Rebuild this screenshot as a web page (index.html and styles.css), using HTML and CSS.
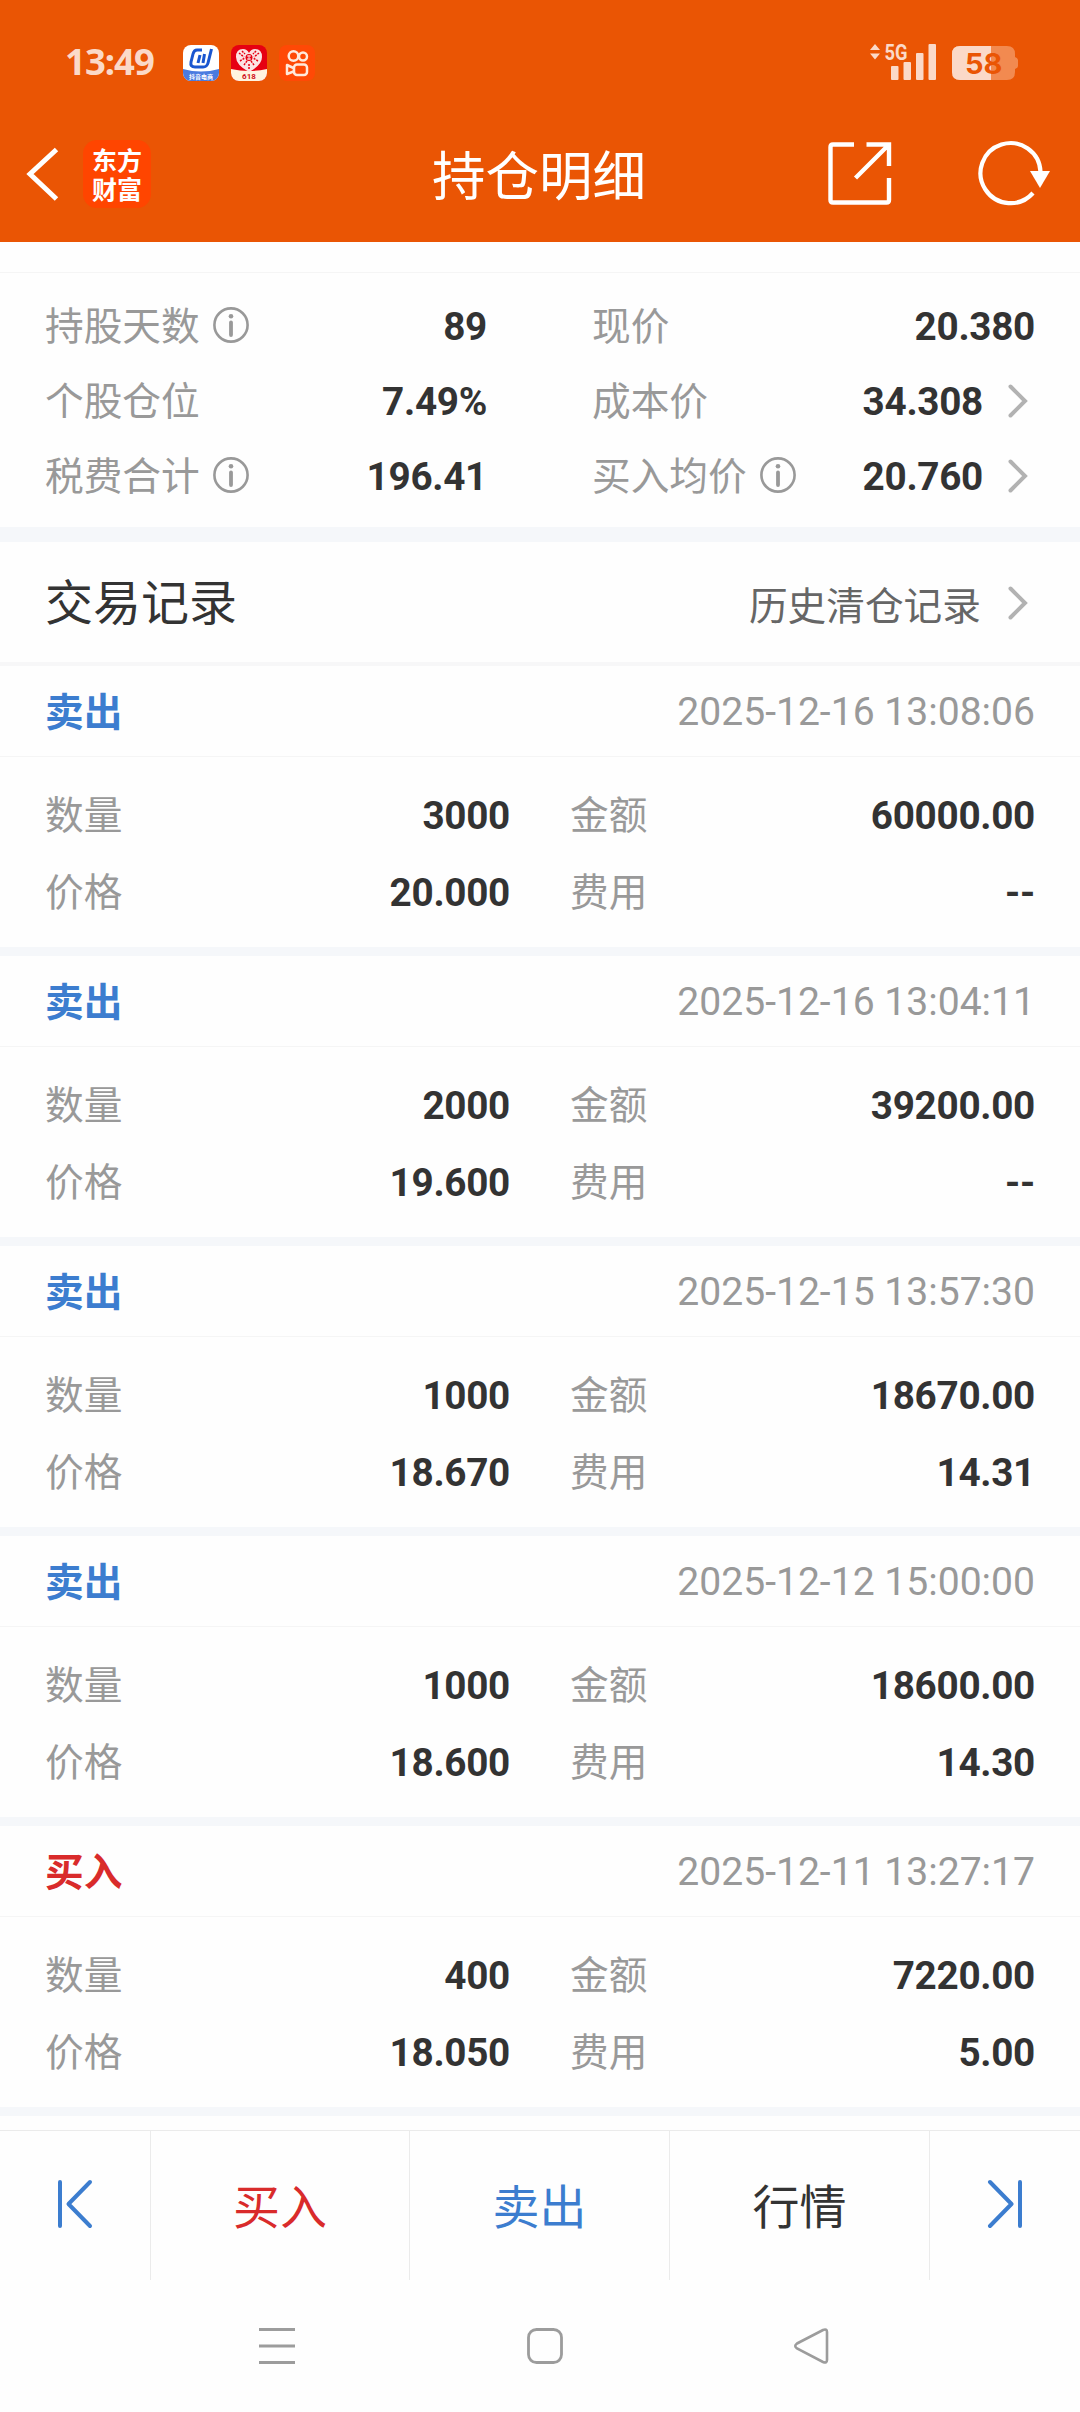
FILE: index.html
```
<!DOCTYPE html>
<html lang="zh-CN">

<head>
    <meta charset="UTF-8">
    <meta name="viewport" content="width=device-width, initial-scale=1.0">
    <title>持仓明细</title>
    <link rel="stylesheet" href="styles.css">
</head>

<body>
    <!-- shared icons -->
    <svg class="defs" width="0" height="0">
        <symbol id="info" viewBox="0 0 36 36">
            <circle cx="18" cy="18" r="16.6" fill="none" stroke="#999" stroke-width="2.6" />
            <circle cx="18" cy="9.2" r="2.3" fill="#999" />
            <path d="M18 15.5v12.5" stroke="#999" stroke-width="3.8" stroke-linecap="round" />
        </symbol>
        <symbol id="more" viewBox="0 0 20 34">
            <path d="M2.5 2.5L17 17L2.5 31.5" fill="none" stroke="#b2b2b2" stroke-width="4" stroke-linecap="round" />
        </symbol>
    </svg>

    <header class="header">
        <div class="status">
            <span class="time">13:49</span>
            <div class="apps">
                <svg width="36" height="36" viewBox="0 0 36 36">
                    <clipPath id="tile"><rect width="36" height="36" rx="8" /></clipPath>
                    <g clip-path="url(#tile)">
                        <rect width="36" height="36" fill="#fff" />
                        <path d="M0 24Q18 29 36 24V36H0z" fill="#4a7be0" />
                        <path d="M19 5H14Q11 5 10 9L8 17Q7 22 12 22H20Q24 22 25 18L28.500 4M15 18L17 10M20 18L21.500 9" fill="none" stroke="#1a56d0" stroke-width="3" />
                    </g>
                    <text class="tile-text" x="18" y="34" font-size="6">抖音电商</text>
                </svg>
                <svg width="36" height="36" viewBox="0 0 36 36">
                    <g clip-path="url(#tile)">
                        <rect width="36" height="36" fill="#e60012" />
                        <path d="M0 24Q18 28 36 24V36H0z" fill="#fff4e0" />
                        <path d="M18 27Q5 20 5 12Q5 4 12 4Q16 4 18 8Q20 4 24 4Q31 4 31 12Q31 20 18 27z" fill="#fbe3e3" />
                        <path d="M8 8l5 4M9 16l5-3M13 20l3-4M28 8l-5 4M27 16l-5-3M23 20l-3-4M18 19v5M11 6l3 3M25 6l-3 3" stroke="#e60012" stroke-width="1.500" stroke-dasharray="2 1" />
                        <circle cx="18" cy="12.500" r="3.500" fill="#e60012" />
                        <path d="M16 11H20M16 14H20M18 10V15" stroke="#fbe3e3" />
                    </g>
                    <text class="tile-text tile-text-red" x="18" y="34" font-size="8">618</text>
                </svg>
                <svg width="36" height="36" viewBox="0 0 36 36">
                    <rect width="36" height="36" rx="8" fill="#ff4906" />
                    <g fill="none" stroke="#ffe9dc" stroke-width="2.500">
                        <circle cx="14.500" cy="11" r="4.800" />
                        <circle cx="24" cy="11.500" r="4" />
                        <rect x="15" y="19.500" width="13" height="10.500" rx="3" />
                        <path d="M14.500 23L8 20V29L14.500 26.500" stroke-linejoin="round" />
                    </g>
                </svg>
            </div>
            <svg class="signal" width="68" height="38" viewBox="0 0 68 38">
                <path d="M2 7L7 1L12 7zM2 10.500L7 16.500L12 10.500z" fill="#fbd9c8" />
                <text class="net" x="16.500" y="16.500" textLength="23" lengthAdjust="spacingAndGlyphs">5G</text>
                <g fill="#fbd9c8">
                    <rect x="23" y="23" width="7.500" height="14" rx="1" />
                    <rect x="35.500" y="19" width="7.500" height="18" rx="1" />
                    <rect x="48" y="10" width="7.500" height="27" rx="1" />
                    <rect x="60.500" y="1" width="7.500" height="36" rx="1" />
                </g>
            </svg>
            <svg class="battery" width="66" height="34" viewBox="0 0 66 34">
                <path d="M8 0H55Q63 0 63 8V11Q66 12 66 14V20Q66 22 63 23V26Q63 34 55 34H8Q0 34 0 26V8Q0 0 8 0z" fill="#f28a50" />
                <path d="M8 0H39V34H8Q0 34 0 26V8Q0 0 8 0z" fill="#fbd9c8" />
                <text class="level" x="31.700" y="28">58</text>
            </svg>
        </div>
        <div class="nav">
            <svg class="back" width="32" height="56" viewBox="0 0 32 56">
                <path d="M30.500 3.500L4 28L30.500 53" fill="none" stroke="#fff" stroke-width="5" />
            </svg>
            <div class="logo"><span>东方</span><span>财富</span></div>
            <h1 class="title">持仓明细</h1>
            <svg class="share" width="64" height="64" viewBox="0 0 64 64">
                <path d="M26 2.500H5Q2.500 2.500 2.500 5V58Q2.500 60.500 5 60.500H58.500Q61 60.500 61 58V36M38.500 2.500H61V24M61 2.500L27.500 36" fill="none" stroke="#fff" stroke-width="4.400" />
            </svg>
            <svg class="refresh" width="72" height="64" viewBox="0 0 72 64">
                <path d="M54 51A30 30 0 1 1 61.500 30" fill="none" stroke="#fff" stroke-width="4.200" />
                <path d="M51 29H71L61 46z" fill="#fff" />
            </svg>
        </div>
    </header>

    <section class="summary">
        <div class="item"><span class="label">持股天数</span><svg class="info"><use href="#info" /></svg><b>89</b></div>
        <div class="item"><span class="label">现价</span><b>20.380</b></div>
        <div class="item"><span class="label">个股仓位</span><b>7.49%</b></div>
        <div class="item"><span class="label">成本价</span><b>34.308</b><svg class="more"><use href="#more" /></svg></div>
        <div class="item"><span class="label">税费合计</span><svg class="info"><use href="#info" /></svg><b>196.41</b></div>
        <div class="item"><span class="label">买入均价</span><svg class="info"><use href="#info" /></svg><b>20.760</b><svg class="more"><use href="#more" /></svg></div>
    </section>

    <div class="section-head">
        <h2>交易记录</h2>
        <span class="history">历史清仓记录</span>
        <svg class="more"><use href="#more" /></svg>
    </div>

    <main>
        <article class="record">
            <div class="record-head"><strong class="sell">卖出</strong><time>2025-12-16 13:08:06</time></div>
            <div class="record-body">
                <span>数量</span><b>3000</b><span>金额</span><b>60000.00</b>
                <span>价格</span><b>20.000</b><span>费用</span><b>--</b>
            </div>
        </article>
        <article class="record">
            <div class="record-head"><strong class="sell">卖出</strong><time>2025-12-16 13:04:11</time></div>
            <div class="record-body">
                <span>数量</span><b>2000</b><span>金额</span><b>39200.00</b>
                <span>价格</span><b>19.600</b><span>费用</span><b>--</b>
            </div>
        </article>
        <article class="record">
            <div class="record-head"><strong class="sell">卖出</strong><time>2025-12-15 13:57:30</time></div>
            <div class="record-body">
                <span>数量</span><b>1000</b><span>金额</span><b>18670.00</b>
                <span>价格</span><b>18.670</b><span>费用</span><b>14.31</b>
            </div>
        </article>
        <article class="record">
            <div class="record-head"><strong class="sell">卖出</strong><time>2025-12-12 15:00:00</time></div>
            <div class="record-body">
                <span>数量</span><b>1000</b><span>金额</span><b>18600.00</b>
                <span>价格</span><b>18.600</b><span>费用</span><b>14.30</b>
            </div>
        </article>
        <article class="record">
            <div class="record-head"><strong class="buy">买入</strong><time>2025-12-11 13:27:17</time></div>
            <div class="record-body">
                <span>数量</span><b>400</b><span>金额</span><b>7220.00</b>
                <span>价格</span><b>18.050</b><span>费用</span><b>5.00</b>
            </div>
        </article>
    </main>

    <footer class="actions">
        <div class="action">
            <svg width="36" height="50" viewBox="0 0 36 50">
                <path d="M3 3V47M33 3L11.500 25L33 47" fill="none" stroke="#3c7dcf" stroke-width="4" stroke-linecap="round" stroke-linejoin="round" />
            </svg>
        </div>
        <div class="action buy">买入</div>
        <div class="action sell">卖出</div>
        <div class="action">行情</div>
        <div class="action">
            <svg width="36" height="50" viewBox="0 0 36 50">
                <path d="M33 3V47M3 3L24.500 25L3 47" fill="none" stroke="#3c7dcf" stroke-width="4" stroke-linecap="round" stroke-linejoin="round" />
            </svg>
        </div>
    </footer>

    <div class="system-bar">
        <svg width="36" height="36" viewBox="0 0 36 36">
            <path d="M0 1.500H36M0 18H36M0 34.500H36" stroke="#9c9c9c" stroke-width="3" />
        </svg>
        <svg width="36" height="36" viewBox="0 0 36 36">
            <rect x="1.500" y="1.500" width="33" height="33" rx="8" fill="none" stroke="#9c9c9c" stroke-width="2.800" />
        </svg>
        <svg width="36" height="36" viewBox="0 0 36 36">
            <path d="M3 15.500L29 2Q33 .500 33 4V32Q33 35.500 29 34L3 20.500Q-.500 18 3 15.500z" fill="none" stroke="#9c9c9c" stroke-width="2.600" />
        </svg>
    </div>
</body>

</html>
```
FILE: styles.css
```
* {
    box-sizing: border-box;
}
body {
    margin: 0;
    width: 1080px;
    background: #fefefe;
    color: #333;
    font-family: Roboto, "Noto Sans CJK SC", sans-serif;
    font-size: 38.7px;
    line-height: 1;
}
h1,
h2 {
    margin: 0;
    font-weight: 400;
}
svg {
    display: block;
    flex: none;
    overflow: visible;
}
.defs {
    position: absolute;
}

/* header */
.header {
    height: 242px;
    background: #ea5504;
    color: #fff;
}
.status {
    display: flex;
    align-items: flex-start;
    height: 106px;
    padding: 43px 62px 0 65px;
}
.time {
    width: 118px;
    color: #fbd9c8;
    font-family: "Noto Sans", sans-serif;
    font-size: 36.5px;
    font-weight: 700;
    letter-spacing: -1px;
    line-height: 37px;
}
.apps {
    display: flex;
    gap: 12px;
    margin-top: 2px;
}
.tile-text {
    fill: #fff;
    font-weight: 700;
    text-anchor: middle;
}
.tile-text-red {
    fill: #d0101a;
}
.signal {
    margin-left: auto;
}
.net {
    fill: #fbd9c8;
    font-size: 22px;
    font-weight: 700;
}
.battery {
    margin: 3px 0 0 16px;
}
.level {
    fill: #ea5504;
    font-family: Inter, sans-serif;
    font-size: 29px;
    font-weight: 700;
    text-anchor: middle;
}
.nav {
    display: flex;
    align-items: center;
    height: 136px;
    padding: 0 29px 0 26px;
}
.logo {
    display: flex;
    flex-direction: column;
    align-items: center;
    justify-content: center;
    gap: 4px;
    width: 68px;
    height: 68px;
    margin-left: 25px;
    border-radius: 14px;
    background: #ff4500;
    font-family: "Noto Sans CJK SC", sans-serif;
    font-size: 25px;
    font-weight: 700;
}
.title {
    flex: 1;
    margin-left: 281px;
    padding-top: 8px;
    font-size: 53.5px;
}
.refresh {
    margin-left: 87px;
}

/* position summary */
.summary {
    display: grid;
    grid-template-columns: 442px 443px;
    grid-auto-rows: 75px;
    column-gap: 105px;
    margin-top: 30px;
    padding: 17px 45px 12px;
    border-top: 1px solid #f5f5f5;
    border-bottom: 15px solid #f5f7fa;
    height: 270px;
}
.item {
    display: flex;
    align-items: center;
}
.item b {
    margin-left: auto;
}
b {
    font-weight: 700;
    letter-spacing: -.3px;
}
.label {
    color: #999;
}
.info {
    width: 36px;
    height: 36px;
    margin: 0 0 6px 13px;
}
.more {
    width: 20px;
    height: 34px;
    margin: 0 7px 4px 25px;
}

/* records */
.section-head {
    display: flex;
    align-items: center;
    height: 124px;
    padding: 2px 45px 0;
    border-bottom: 4px solid #f7f7f8;
}
.section-head h2 {
    flex: 1;
    padding-top: 2px;
    font-size: 48px;
}
.history {
    padding-top: 8px;
    color: #666;
}
.section-head .more {
    margin-left: 27px;
    margin-bottom: 0;
}
.record {
    height: 290px;
    border-bottom: 9px solid #f5f7fa;
}
.record-head {
    display: flex;
    align-items: center;
    justify-content: space-between;
    height: 91px;
    padding: 4px 45px 0;
    border-bottom: 1px solid #f5f5f5;
}
.record-head time {
    color: #999;
    font-size: 39.1px;
}
.sell {
    color: #3c7dcf;
}
.buy {
    color: #d92b2b;
}
.record-body {
    display: grid;
    grid-template-columns: 100px 365px 160px 365px;
    grid-auto-rows: 77px;
    align-items: center;
    padding: 21px 45px 0;
}
.record-body span {
    color: #999;
}
.record-body b {
    text-align: right;
}
.record-body span:nth-of-type(even) {
    padding-left: 60px;
}

/* bottom */
.actions {
    display: grid;
    grid-template-columns: 151px 259px 260px 260px 150px;
    height: 150px;
    margin-top: 14px;
    border-top: 1px solid #ebebeb;
    font-size: 47px;
}
.action {
    display: flex;
    align-items: center;
    justify-content: center;
    padding-top: 4px;
    border-right: 1px solid #ebebeb;
}
.action svg {
    margin-bottom: 7px;
}
.action:last-child {
    border: none;
}
.system-bar {
    display: flex;
    gap: 232px;
    height: 132px;
    padding: 48px 0 0 259px;
}
.system-bar svg:last-child {
    margin-left: -1px;
}
```
